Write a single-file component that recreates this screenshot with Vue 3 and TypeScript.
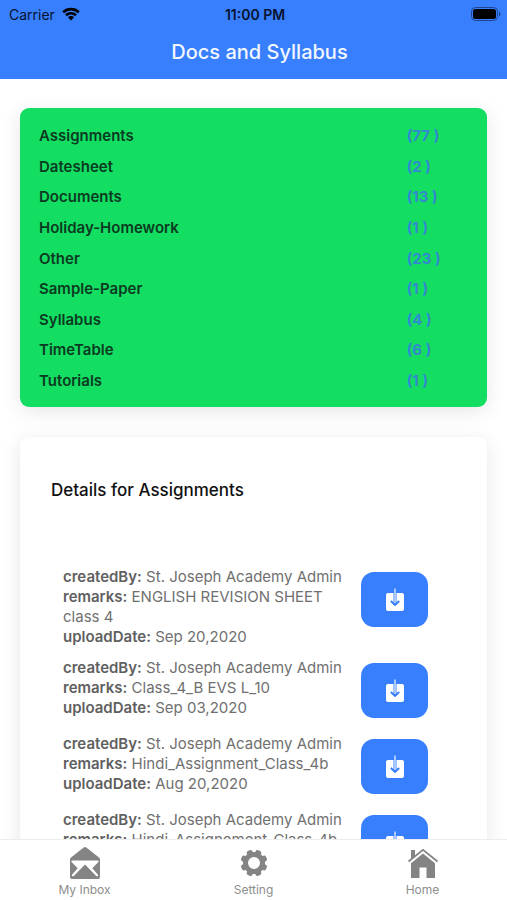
<script setup lang="ts">
interface Category {
  name: string
  count: number
}

interface DocItem {
  createdBy: string
  remarks: string
  uploadDate: string
}

const categories: Category[] = [
  { name: 'Assignments', count: 77 },
  { name: 'Datesheet', count: 2 },
  { name: 'Documents', count: 13 },
  { name: 'Holiday-Homework', count: 1 },
  { name: 'Other', count: 23 },
  { name: 'Sample-Paper', count: 1 },
  { name: 'Syllabus', count: 4 },
  { name: 'TimeTable', count: 6 },
  { name: 'Tutorials', count: 1 },
]

const docs: DocItem[] = [
  { createdBy: 'St. Joseph Academy Admin', remarks: 'ENGLISH REVISION SHEET class 4', uploadDate: 'Sep 20,2020' },
  { createdBy: 'St. Joseph Academy Admin', remarks: 'Class_4_B EVS L_10', uploadDate: 'Sep 03,2020' },
  { createdBy: 'St. Joseph Academy Admin', remarks: 'Hindi_Assignment_Class_4b', uploadDate: 'Aug 20,2020' },
  { createdBy: 'St. Joseph Academy Admin', remarks: 'Hindi_Assignement_Class_4b', uploadDate: 'Aug 20,2020' },
]
</script>

<template>
  <div class="screen">
    <header class="header">
      <div class="status">
        <span class="carrier">
          Carrier
          <svg class="wifi" viewBox="0 0 18 14" aria-hidden="true">
            <path d="M1.2 5.2a11.3 11.3 0 0 1 15.6 0" />
            <path d="M4 8.2a7.2 7.2 0 0 1 10 0" />
            <path class="dot" d="M9 13.4 5.9 10.3a4.4 4.4 0 0 1 6.2 0Z" />
          </svg>
        </span>
        <span class="clock">11:00 PM</span>
        <svg class="battery" viewBox="0 0 30 14" aria-hidden="true">
          <rect class="shell" x="0.5" y="0.5" width="26" height="13" rx="4" />
          <rect x="2" y="2" width="23" height="10" rx="2.5" />
          <path class="cap" d="M28 4.5a2.8 2.8 0 0 1 0 5Z" />
        </svg>
      </div>
      <h1 class="title">Docs and Syllabus</h1>
    </header>

    <main class="content">
      <ul class="card categories">
        <li v-for="c in categories" :key="c.name">
          <a class="category" href="#details">
            <span>{{ c.name }}</span>
            <span class="count">({{ c.count }} )</span>
          </a>
        </li>
      </ul>

      <section id="details" class="card details">
        <h2 class="details-title">Details for Assignments</h2>
        <ul class="docs">
          <li v-for="d in docs" :key="d.remarks" class="doc">
            <div class="doc-text">
              <p><b>createdBy:</b> {{ d.createdBy }}</p>
              <p><b>remarks:</b> {{ d.remarks }}</p>
              <p><b>uploadDate:</b> {{ d.uploadDate }}</p>
            </div>
            <button class="download" type="button" aria-label="Download">
              <svg viewBox="0 0 18 24" aria-hidden="true">
                <rect class="tray" x="0" y="5" width="18" height="18" rx="2" />
                <path class="slot" d="M9 5V16.5" />
                <path class="arrow" d="M4.8 13 9 16.800l4.200-3.800" />
                <path class="stem" d="M9 0.500V15" />
              </svg>
            </button>
          </li>
        </ul>
      </section>
    </main>

    <nav class="tabs">
      <a class="tab" href="#inbox">
        <svg viewBox="0 0 32 34" aria-hidden="true">
          <path d="M14.7 1.6a2 2 0 0 1 2.6 0L30 11.5c.7.6 1 1.2 1 2V31a2 2 0 0 1-2 2H3a2 2 0 0 1-2-2V13.5c0-.8.3-1.4 1-2Z" />
          <path class="cut" d="M3.500 14.500h25c1.300 0 1.500 1 .7 1.800L23.300 22.300l5.500 6.200c1 1.300-.4 2.500-1.600 1.500L16 18.500 4.800 30c-1.200 1-2.600-.2-1.600-1.500l5.500-6.200-5.900-6c-.8-.8-.6-1.800.7-1.800Z" />
        </svg>
        My Inbox
      </a>
      <a class="tab" href="#setting">
        <svg viewBox="0 0 32 34" aria-hidden="true">
          <g transform="translate(16 17)">
            <circle class="ring" r="8.5" />
            <rect v-for="n in 8" :key="n" x="-3" y="-13.5" width="6" height="6" rx="2" :transform="`rotate(${n * 45 + 22.5})`" />
          </g>
        </svg>
        Setting
      </a>
      <a class="tab" href="#home">
        <svg viewBox="0 0 32 34" aria-hidden="true">
          <path d="M4 4h4v6.5L4 14Z" />
          <path class="roof" d="M1.5 15.5 16 3.8l14.5 11.7" />
          <path d="M4 17.2 16 7.5l12 9.7V32h-8.5V21.5h-7V32H4Z" />
        </svg>
        Home
      </a>
    </nav>
  </div>
</template>

<style>
body {
  margin: 0;
  background: #fff;
}
</style>

<style scoped>
.screen {
  display: flex;
  flex-direction: column;
  height: 100vh;
  font-family: Inter, 'Liberation Sans', sans-serif;
  background: #fff;
}

.header {
  flex: none;
  background: #387ffe;
}

.status {
  display: grid;
  grid-template-columns: 1fr auto 1fr;
  align-items: center;
  height: 28px;
  padding: 0 6px 0 9px;
  font-size: 14px;
  color: #061330;
}

.carrier {
  display: flex;
  align-items: center;
  gap: 7px;
}

.wifi {
  width: 18px;
  height: 14px;
  fill: none;
  stroke: #000;
  stroke-width: 2.6;
}

.wifi .dot {
  fill: #000;
  stroke: none;
}

.clock {
  font-weight: 600;
}

.battery {
  justify-self: end;
  width: 30px;
  height: 14px;
}

.shell {
  fill: none;
  stroke: #1d4591;
}

.cap {
  fill: #1d4591;
}

.title {
  margin: 0;
  padding: 8px 0 11px 12px;
  font-size: 20px;
  line-height: 32px;
  font-weight: 500;
  text-align: center;
  color: #f2f7ff;
}

.content {
  flex: 1;
  min-height: 0;
  display: flex;
  flex-direction: column;
  gap: 30px;
  padding: 29px 20px 0;
  overflow-y: auto;
  scrollbar-width: none;
}

.card {
  flex: none;
  border-radius: 9px;
  box-shadow: 0 4px 20px rgba(0, 0, 0, 0.1);
}

.categories {
  display: flex;
  flex-direction: column;
  justify-content: space-between;
  box-sizing: border-box;
  min-height: 299px;
  margin: 0;
  padding: 18px 19px 16px;
  list-style: none;
  background: #14de61;
}

.category {
  display: grid;
  grid-template-columns: 6fr 1fr;
  font-size: 15px;
  line-height: 20px;
  font-weight: 600;
  color: #0b3a22;
  text-decoration: none;
}

.count {
  font-weight: 700;
  color: #3289cf;
}

.details {
  padding: 40px 31px;
  background: #fff;
}

.details-title {
  margin: 0;
  font-size: 17px;
  line-height: 26px;
  font-weight: 500;
  color: #111;
}

.docs {
  display: flex;
  flex-direction: column;
  gap: 11px;
  margin: 0;
  padding: 64px 12px 0;
  list-style: none;
}

.doc {
  display: grid;
  grid-template-columns: 1fr 83px;
  column-gap: 15px;
  align-items: start;
  min-height: 65px;
}

.doc-text {
  font-size: 15px;
  line-height: 20px;
  color: #707070;
}

.doc-text p {
  margin: 0;
}

.doc-text b {
  font-weight: 600;
  color: #606060;
}

.download {
  display: grid;
  place-items: center;
  width: 67px;
  height: 55px;
  margin: 5px 0 0;
  padding: 0;
  border: 0;
  border-radius: 13px;
  background: #387ffe;
}

.download svg {
  width: 18px;
  height: 24px;
  fill: none;
}

.download .tray {
  fill: #fff;
}

.slot {
  stroke: #387ffe;
  stroke-width: 3;
}

.arrow {
  stroke: #387ffe;
  stroke-width: 2;
}

.stem {
  stroke: #cfe0ff;
  stroke-width: 1.5;
}

.tabs {
  flex: none;
  display: grid;
  grid-template-columns: repeat(3, 1fr);
  padding: 6px 0 1px;
  border-top: 1px solid #ededed;
  background: #fff;
}

.tab {
  display: flex;
  flex-direction: column;
  align-items: center;
  gap: 1px;
  font-size: 12px;
  line-height: 18px;
  color: #8e8e8e;
  text-decoration: none;
}

.tab svg {
  width: 32px;
  height: 34px;
  fill: #848484;
}

.tab .cut {
  fill: #fff;
}

.tab .ring {
  fill: none;
  stroke: #848484;
  stroke-width: 5;
}

.tab .roof {
  fill: none;
  stroke: #848484;
  stroke-width: 1.8;
}
</style>
